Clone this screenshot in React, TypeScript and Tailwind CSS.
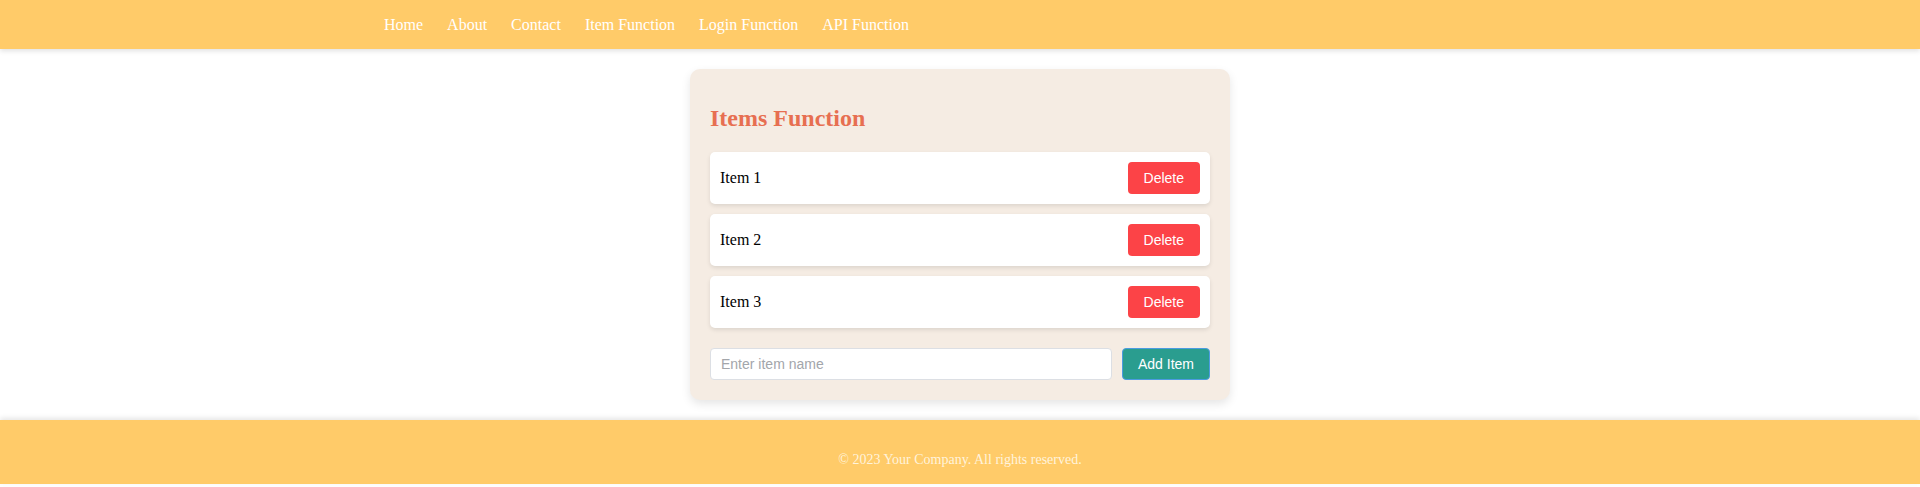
import React from "react";

const serif = { fontFamily: '"Liberation Serif", "Times New Roman", serif' };

export default function App() {
  const items = ["Item 1", "Item 2", "Item 3"];
  const links = ["Home", "About", "Contact", "Item Function", "Login Function", "API Function"];
  return (
    <div className="bg-white min-h-[487px] font-['Liberation_Serif',serif] text-black">
      <header className="relative z-10 h-[49px] bg-[#ffcb69] shadow-[0_2px_5px_rgba(0,0,0,0.12)]">
        <nav className="max-w-6xl mx-auto h-full flex items-center gap-6 text-[16px] text-white">
          {links.map((l) => (
            <a key={l} className="leading-[normal] cursor-pointer">{l}</a>
          ))}
        </nav>
      </header>
      <main className="pt-[20px] pb-[20px]">
        <div className="mx-auto w-[540px] bg-[#f5ece3] rounded-[10px] p-[20px] shadow-[0_4px_10px_rgba(0,0,0,0.1)]">
          <h2 className="mt-[16px] mb-[20px] text-[24px] leading-[27px] font-bold text-[#e76f51]" style={serif}>
            Items Function
          </h2>
          <ul className="flex flex-col gap-[10px]">
            {items.map((it) => (
              <li
                key={it}
                className="flex items-center justify-between bg-white rounded-[5px] p-[10px] shadow-[0_2px_4px_rgba(0,0,0,0.1)]"
              >
                <span className="text-[16px] leading-[normal]">{it}</span>
                <button className="h-[32px] px-[16px] rounded-[4px] bg-[#fc4347] text-white text-[14px] leading-[16px] font-['Liberation_Sans',Arial,sans-serif]">
                  Delete
                </button>
              </li>
            ))}
          </ul>
          <div className="mt-[20px] flex gap-[10px]">
            <input
              placeholder="Enter item name"
              className="flex-1 h-[32px] px-[10px] rounded-[4px] border border-[#dcdfe4] bg-white text-[14px] font-['Liberation_Sans',Arial,sans-serif] placeholder:text-[#a3a6ab] outline-none"
            />
            <button className="h-[32px] px-[15px] rounded-[4px] border border-[#4b9be0] bg-[#2a9d8f] text-white text-[14px] leading-[16px] font-['Liberation_Sans',Arial,sans-serif]">
              Add Item
            </button>
          </div>
        </div>
      </main>
      <footer className="bg-[#ffcb69] pt-[32px] pb-[16px] text-center shadow-[0_-2px_5px_rgba(0,0,0,0.1)]">
        <p className="text-[14px] leading-[normal] text-[#fff3dc]">© 2023 Your Company. All rights reserved.</p>
      </footer>
    </div>
  );
}
